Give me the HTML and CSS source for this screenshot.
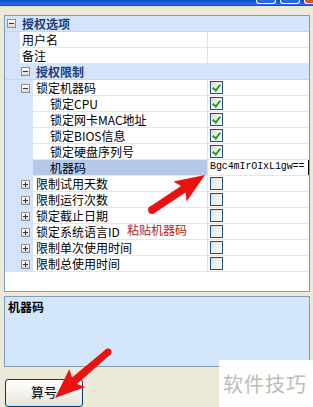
FILE: index.html
```html
<!DOCTYPE html>
<html lang="zh-CN">
<head>
    <meta charset="UTF-8">
    <title>授权选项</title>
    <link rel="stylesheet" href="styles.css">
</head>
<body>
    <div class="titlebar">
        <span class="win-btn"></span>
        <span class="win-btn"></span>
        <span class="win-btn close"></span>
    </div>

    <div class="main">
        <div class="grid">
            <div class="row cat l0"><span class="exp minus"></span><span class="cat-text">授权选项</span></div>
            <div class="row prop l1"><span class="gutter"></span><span class="name">用户名</span><span class="value"></span></div>
            <div class="row prop l1"><span class="gutter"></span><span class="name">备注</span><span class="value"></span></div>
            <div class="row cat l1"><span class="exp minus"></span><span class="cat-text">授权限制</span></div>
            <div class="row prop l2"><span class="gutter"><span class="exp minus"></span></span><span class="name">锁定机器码</span><span class="value"><span class="chk on"></span></span></div>
            <div class="row prop l3"><span class="gutter"></span><span class="name">锁定CPU</span><span class="value"><span class="chk on"></span></span></div>
            <div class="row prop l3"><span class="gutter"></span><span class="name">锁定网卡MAC地址</span><span class="value"><span class="chk on"></span></span></div>
            <div class="row prop l3"><span class="gutter"></span><span class="name">锁定BIOS信息</span><span class="value"><span class="chk on"></span></span></div>
            <div class="row prop l3"><span class="gutter"></span><span class="name">锁定硬盘序列号</span><span class="value"><span class="chk on"></span></span></div>
            <div class="row prop l3 selected"><span class="gutter"></span><span class="name">机器码</span><span class="value"><span class="edit">Bgc4mIrOIxL1gw==</span></span></div>
            <div class="row prop l2"><span class="gutter"><span class="exp"></span></span><span class="name">限制试用天数</span><span class="value"><span class="chk"></span></span></div>
            <div class="row prop l2"><span class="gutter"><span class="exp"></span></span><span class="name">限制运行次数</span><span class="value"><span class="chk"></span></span></div>
            <div class="row prop l2"><span class="gutter"><span class="exp"></span></span><span class="name">锁定截止日期</span><span class="value"><span class="chk"></span></span></div>
            <div class="row prop l2"><span class="gutter"><span class="exp"></span></span><span class="name">锁定系统语言ID</span><span class="value"><span class="chk"></span></span></div>
            <div class="row prop l2"><span class="gutter"><span class="exp"></span></span><span class="name">限制单次使用时间</span><span class="value"><span class="chk"></span></span></div>
            <div class="row prop l2"><span class="gutter"><span class="exp"></span></span><span class="name">限制总使用时间</span><span class="value"><span class="chk"></span></span></div>
        </div>

        <div class="desc">
            <div class="desc-title">机器码</div>
        </div>

        <button class="btn">算号</button>
    </div>

    <div class="note">粘贴机器码</div>

    <svg class="arrows" width="313" height="407" viewBox="0 0 313 407">
        <polygon points="205,175 186.6,201.5 185.6,192.6 154.2,213.3 149.8,206.7 181,186 173.4,181.5" />
        <circle cx="152" cy="210" r="3.9" />
        <polygon points="55,398 85.4,387.1 77,384 110.3,354.6 105.7,349.4 72,377.4 69.4,369.1" />
        <circle cx="108" cy="352" r="3.5" />
    </svg>

    <div class="watermark">软件技巧</div>
</body>
</html>
```

FILE: styles.css
```css
* {
    margin: 0;
    padding: 0;
    box-sizing: border-box;
}

body {
    width: 313px;
    height: 407px;
    overflow: hidden;
    background: #ece9d8;
    font-family: "Noto Sans CJK SC", "Noto Sans", sans-serif;
    font-size: 12px;
    color: #000;
    position: relative;
}

/* window title bar (only its bottom edge is visible) */
.titlebar {
    height: 6px;
    background: linear-gradient(#0a4fd0, #2a6ee6);
    border-bottom: 1px solid #1a4db8;
    display: flex;
    justify-content: flex-end;
    gap: 4px;
}

.win-btn {
    width: 20px;
    height: 5px;
    margin-top: -1px;
    border: 1px solid #fff;
    border-top: none;
    border-radius: 0 0 3px 3px;
    background: #2d68e4;
}

.win-btn.close {
    width: 9px;
    border-right: none;
    border-radius: 0 0 0 3px;
    background: #d9532c;
}

.main {
    padding: 9px 3px 0 4px;
}

/* property grid */
.grid {
    height: 277px;
    border: 1px solid #7f9db9;
    background: #fff;
}

.row {
    display: flex;
    height: 16px;
    line-height: 15px;
}

.cat {
    background: #d4e4fa;
    align-items: center;
    border-bottom: 1px solid #c3d6f0;
}

.cat.l0 {
    padding-left: 2px;
}

.cat.l1 {
    padding-left: 16px;
}

.cat-text {
    margin-left: 6px;
    font-weight: bold;
    line-height: 15px;
    color: #1f3d7a;
}

.gutter {
    flex: none;
    background: #d4e4fa;
    display: flex;
    align-items: center;
}

.l1 .gutter {
    width: 15px;
}

.l2 .gutter,
.l3 .gutter {
    width: 28px;
    padding-left: 16px;
}

.name {
    flex: none;
    border-right: 1px solid #d6e2f1;
    border-bottom: 1px solid #dde7f4;
    white-space: nowrap;
    overflow: hidden;
}

.l1 .name {
    width: 188px;
    padding-left: 2px;
}

.l2 .name {
    width: 175px;
    padding-left: 3px;
}

.l3 .name {
    width: 175px;
    padding-left: 17px;
}

.selected .name {
    background: #b5c8e8;
}

.value {
    flex: 1;
    border-bottom: 1px solid #dde7f4;
    display: flex;
    align-items: center;
    padding-left: 2px;
    overflow: hidden;
}

/* expand / collapse box */
.exp {
    width: 9px;
    height: 9px;
    border: 1px solid #8a8f96;
    background: linear-gradient(#fff, #d8d8d0);
    position: relative;
    flex: none;
}

.exp::before {
    content: "";
    position: absolute;
    left: 1px;
    top: 3px;
    width: 5px;
    height: 1px;
    background: #333;
}

.exp:not(.minus)::after {
    content: "";
    position: absolute;
    left: 3px;
    top: 1px;
    width: 1px;
    height: 5px;
    background: #333;
}

/* check box */
.chk {
    width: 13px;
    height: 13px;
    border: 1px solid #1c4f7e;
    background: linear-gradient(135deg, #e2e2dc, #fff);
    position: relative;
}

.chk.on::after {
    content: "";
    position: absolute;
    left: 3px;
    top: 1px;
    width: 3px;
    height: 6px;
    border: solid #21a121;
    border-width: 0 2px 2px 0;
    transform: rotate(40deg);
}

.edit {
    font-family: "Liberation Mono", monospace;
    font-size: 10px;
    letter-spacing: -0.1px;
    line-height: 14px;
    height: 15px;
    width: 100%;
    white-space: nowrap;
    border-right: 1px solid #000;
    background: #fff;
}

/* description panel */
.desc {
    margin-top: 4px;
    height: 71px;
    border: 1px solid #7f9db9;
    background: #d4e6fc;
    padding: 3px;
}

.desc-title {
    font-weight: bold;
    line-height: 14px;
}

.btn {
    margin-top: 12px;
    margin-left: 1px;
    width: 78px;
    height: 28px;
    border: 1px solid #003c74;
    border-radius: 3px;
    background: linear-gradient(#fff, #f0f0ea 60%, #e3e2da);
    font-family: "Noto Sans CJK SC", sans-serif;
    font-size: 13px;
    padding-bottom: 4px;
}

/* annotations on top of the screenshot */
.note {
    position: absolute;
    left: 127px;
    top: 222px;
    color: #b5201c;
    font-size: 12px;
    line-height: 16px;
}

.arrows {
    position: absolute;
    left: 0;
    top: 0;
    fill: #ec1111;
    pointer-events: none;
}

.watermark {
    position: absolute;
    right: 0;
    bottom: 0;
    width: 94px;
    height: 47px;
    background: rgba(255, 255, 255, 0.93);
    color: #bcbcbc;
    font-size: 20px;
    line-height: 47px;
    padding-left: 4px;
    letter-spacing: 1px;
    white-space: nowrap;
}
```
